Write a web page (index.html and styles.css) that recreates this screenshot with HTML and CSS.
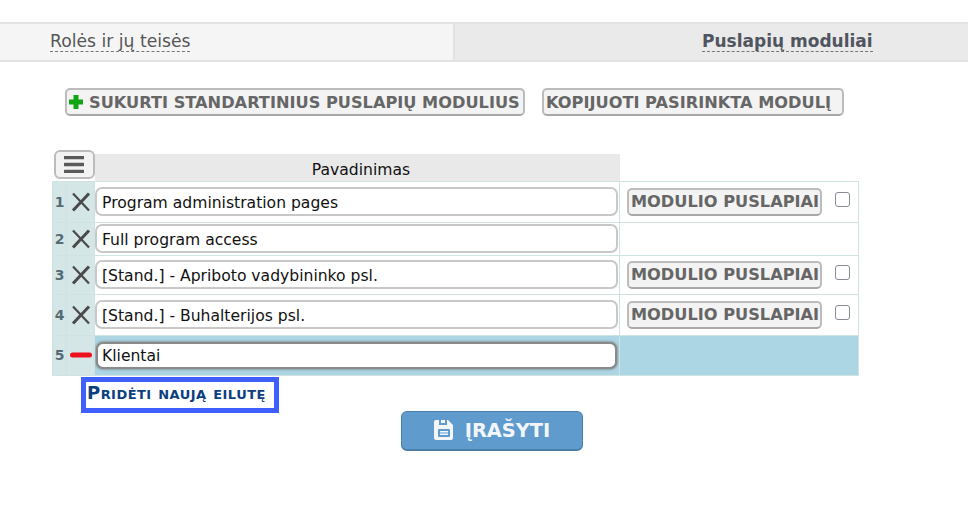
FILE: index.html
```html
<!DOCTYPE html>
<html lang="lt">
<head>
    <meta charset="UTF-8">
    <meta name="viewport" content="width=device-width, initial-scale=1.0">
    <title>Puslapių moduliai</title>
    <link rel="stylesheet" href="styles.css">
</head>
<body>
    <div class="tabs">
        <div class="tab tab-left"><span>Rolės ir jų teisės</span></div>
        <div class="tab tab-active"><span>Puslapių moduliai</span></div>
    </div>

    <div class="toolbar">
        <button class="btn btn-create">
            <svg class="plus-icon" width="16" height="16" viewBox="0 0 16 16"><path d="M5.500 1h5v4.500h4.500v5h-4.500v4.500h-5v-4.500h-4.500v-5h4.500z" fill="#12a512"/></svg>
            SUKURTI STANDARTINIUS PUSLAPIŲ MODULIUS
        </button>
        <button class="btn btn-copy">KOPIJUOTI PASIRINKTA MODULĮ</button>
    </div>

    <table class="modules">
        <colgroup>
            <col class="col-num">
            <col class="col-del">
            <col class="col-name">
            <col class="col-actions">
        </colgroup>
        <tr class="head-row">
            <th colspan="2" class="head-menu">
                <button class="menu-btn" aria-label="Meniu">
                    <svg width="20" height="17" viewBox="0 0 20 17"><path d="M1 1.500h18M1 8.500h18M1 15.500h18" stroke="#5a5a5a" stroke-width="3.400" stroke-linecap="round"/></svg>
                </button>
            </th>
            <th class="head-name">Pavadinimas</th>
            <th class="head-empty"></th>
        </tr>
        <tr class="row-a">
            <td class="num">1</td>
            <td class="del"><svg class="x-icon" width="20" height="20" viewBox="0 0 20 20"><path d="M2 1.500l16 17" stroke="#4a4a4a" stroke-width="2.200"/><path d="M18 1.500l-16 17" stroke="#4a4a4a" stroke-width="3"/></svg></td>
            <td class="name"><input class="name-input" type="text" value="Program administration pages"></td>
            <td class="actions"><button class="btn btn-pages">MODULIO PUSLAPIAI</button><input class="check" type="checkbox"></td>
        </tr>
        <tr class="row-b">
            <td class="num">2</td>
            <td class="del"><svg class="x-icon" width="20" height="20" viewBox="0 0 20 20"><path d="M2 1.500l16 17" stroke="#4a4a4a" stroke-width="2.200"/><path d="M18 1.500l-16 17" stroke="#4a4a4a" stroke-width="3"/></svg></td>
            <td class="name"><input class="name-input" type="text" value="Full program access"></td>
            <td class="actions"></td>
        </tr>
        <tr class="row-c">
            <td class="num">3</td>
            <td class="del"><svg class="x-icon" width="20" height="20" viewBox="0 0 20 20"><path d="M2 1.500l16 17" stroke="#4a4a4a" stroke-width="2.200"/><path d="M18 1.500l-16 17" stroke="#4a4a4a" stroke-width="3"/></svg></td>
            <td class="name"><input class="name-input" type="text" value="[Stand.] - Apriboto vadybininko psl."></td>
            <td class="actions"><button class="btn btn-pages">MODULIO PUSLAPIAI</button><input class="check" type="checkbox"></td>
        </tr>
        <tr class="row-a">
            <td class="num">4</td>
            <td class="del"><svg class="x-icon" width="20" height="20" viewBox="0 0 20 20"><path d="M2 1.500l16 17" stroke="#4a4a4a" stroke-width="2.200"/><path d="M18 1.500l-16 17" stroke="#4a4a4a" stroke-width="3"/></svg></td>
            <td class="name"><input class="name-input" type="text" value="[Stand.] - Buhalterijos psl."></td>
            <td class="actions"><button class="btn btn-pages">MODULIO PUSLAPIAI</button><input class="check" type="checkbox"></td>
        </tr>
        <tr class="row-new">
            <td class="num">5</td>
            <td class="del"><svg width="22" height="6" viewBox="0 0 22 6"><path d="M2.500 3h17" stroke="#f0101c" stroke-width="5" stroke-linecap="round"/></svg></td>
            <td class="name"><input class="name-input name-focus" type="text" value="Klientai"></td>
            <td class="actions"></td>
        </tr>
    </table>

    <a class="add-row" href="#">Pridėti naują eilutę</a>

    <button class="save-btn">
        <svg width="20" height="20" viewBox="0 0 20 20"><path fill-rule="evenodd" d="M2 0h3v5h8v-5h1l5 5v13a2 2 0 0 1-2 2h-15a2 2 0 0 1-2-2v-16a2 2 0 0 1 2-2zM7 0h4v3h-4zM5 9a1 1 0 0 0-1 1v6a1 1 0 0 0 1 1h10a1 1 0 0 0 1-1v-6a1 1 0 0 0-1-1zM6 11h8v1.500h-8zM6 13.500h8v1.500h-8z" fill="#f2f6fa"/></svg>
        ĮRAŠYTI
    </button>
</body>
</html>
```

FILE: styles.css
```css
* {
    box-sizing: border-box;
}

body {
    margin: 0;
    padding-top: 22px;
    background: white;
    color: #111;
    font-family: "DejaVu Sans", Verdana, sans-serif;
    font-size: 15.600px;
}

/* Tabs */
.tabs {
    display: flex;
    height: 40px;
    border-top: 2px solid #e2e2e2;
    border-bottom: 2px solid #e2e2e2;
}

.tab {
    display: flex;
    align-items: center;
    color: #555;
    font-size: 17.200px;
}

.tab span {
    border-bottom: 1px dashed #777;
    line-height: 19px;
}

.tab-left {
    width: 455px;
    padding-left: 50px;
    background: #f5f5f5;
    border-right: 2px solid #e2e2e2;
}

.tab-active {
    flex: 1;
    padding-left: 247px;
    background: #eaeaea;
    font-size: 17px;
    font-weight: bold;
    color: #505560;
}

/* Buttons */
.btn {
    display: inline-flex;
    align-items: center;
    height: 28px;
    padding: 0 1px;
    background: #f3f3f3;
    border: 2px solid #bcbcbc;
    border-bottom-color: #a8a8a8;
    border-radius: 5px;
    color: #666;
    font-family: "DejaVu Sans", Verdana, sans-serif;
    font-size: 16.200px;
    font-weight: bold;
    white-space: nowrap;
}

.toolbar {
    display: flex;
    gap: 17px;
    padding: 26px 0 0 65px;
}

.plus-icon {
    flex-shrink: 0;
    margin-right: 5px;
}

.btn-create {
    width: 460px;
}

.btn-copy {
    width: 302px;
    padding-left: 2px;
}

/* Modules table */
.modules {
    width: 806px;
    margin: 38px 0 0 52px;
    border-collapse: collapse;
    table-layout: fixed;
}

.col-num {
    width: 14px;
}

.col-del {
    width: 28px;
}

.col-name {
    width: 525px;
}

.col-actions {
    width: 239px;
}

.head-row th {
    height: 27px;
    padding: 0;
    font-size: 15.600px;
    font-weight: normal;
    vertical-align: middle;
}

.modules .head-name {
    background: #e9e9e9;
    padding: 6px 0 0 8px;
}

.menu-btn {
    display: flex;
    align-items: center;
    justify-content: center;
    width: 41px;
    height: 29px;
    margin: -6px 0 0 1px;
    padding: 0;
    background: #f3f3f3;
    border: 2px solid #bcbcbc;
    border-radius: 6px;
}

.modules td {
    padding: 0;
    border: 1px solid #cfe3e3;
    vertical-align: middle;
}

.row-a {
    height: 41px;
}

.row-b {
    height: 33px;
}

.row-c {
    height: 39px;
}

.row-new {
    height: 40px;
    background: #add6e4;
}

.modules .num {
    background: #d5e6e6;
    color: #556b75;
    font-size: 14px;
    font-weight: bold;
    text-align: center;
}

.modules .del {
    background: #d5e6e6;
}

.del svg {
    display: block;
    margin: 0 auto;
}

.modules .name {
    padding: 0 1px 0 0;
}

.name-input {
    display: block;
    width: 523px;
    height: 29px;
    padding: 2px 5px 0;
    background: white;
    border: 2px solid #c8c8c8;
    border-radius: 7px;
    color: #111;
    font-family: "DejaVu Sans", Verdana, sans-serif;
    font-size: 15.600px;
    outline: none;
}

.name-focus {
    height: 27px;
    margin-left: 1px;
    width: 521px;
    padding-left: 4px;
    border-color: #8a8a8a;
    box-shadow: 0 0 3px #666;
}

.modules .actions {
    padding-left: 7px;
}

.actions {
    white-space: nowrap;
}

.btn-pages {
    width: 195px;
    height: 28px;
    vertical-align: middle;
    padding-left: 2px;
}

.check {
    width: 15px;
    height: 15px;
    margin: 0 0 4px 13px;
    vertical-align: middle;
    appearance: none;
    background: white;
    border: 1px solid #8a8a94;
    border-radius: 3px;
}

/* Add row link */
.add-row {
    display: block;
    width: 198px;
    height: 36px;
    margin: 1px 0 0 81px;
    padding-left: 1px;
    border: 5px solid #3f5fff;
    color: #0c3f7f;
    font-family: "DejaVu Sans", Verdana, sans-serif;
    font-size: 18px;
    font-weight: bold;
    font-variant: small-caps;
    letter-spacing: 0.45px;
    line-height: 21px;
    text-decoration: none;
    white-space: nowrap;
}

/* Save */
.save-btn {
    display: flex;
    align-items: center;
    justify-content: center;
    gap: 11px;
    width: 182px;
    height: 40px;
    margin: -2px 0 0 401px;
    background: #5f9bcd;
    border: 1px solid #4a7ea8;
    border-bottom-width: 2px;
    border-radius: 6px;
    color: #f2f6fa;
    font-family: "DejaVu Sans", Verdana, sans-serif;
    font-size: 19.400px;
    font-weight: bold;
}
```
